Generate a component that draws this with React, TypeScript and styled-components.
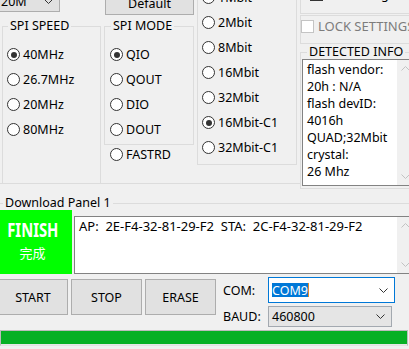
import styled, { createGlobalStyle } from 'styled-components'

const GlobalStyle = createGlobalStyle`
  html, body {
    margin: 0;
    padding: 0;
    background: #f0f0f0;
  }
  body {
    font-family: "Noto Sans", "Noto Sans CJK SC", sans-serif;
    font-size: 12.5px;
    color: #000;
  }
`

const Window = styled.div`
  width: 409px;
  height: 349px;
  overflow: hidden;
  background: #f0f0f0;
`

// the form is scrolled a bit, its top edge is cut off by the window
const Form = styled.div`
  margin-top: -24px;
  width: 430px;
`

const TopArea = styled.div`
  display: flex;
  height: 213px;
`

const Settings = styled.div`
  display: flex;
  width: 300px;
  height: 207px;
  border-bottom: 1px solid #dcdcdc;
`

const Column = styled.div<{ $w: number }>`
  display: flex;
  flex-direction: column;
  width: ${p => p.$w}px;
  flex-shrink: 0;
`

const Group = styled.fieldset`
  margin: 0;
  padding: 0;
  min-width: 0;
  box-sizing: border-box;
  border: 1px solid #dcdcdc;
`

const Legend = styled.legend<{ $indent: number }>`
  margin-left: ${p => p.$indent}px;
  padding: 0 2px;
  line-height: 14px;
  white-space: nowrap;
`

const SpeedGroup = styled(Group)`
  flex: 1;
  margin: 7px 0 0 2px;
  width: 99px;
  border-bottom: none;
`

const ModeGroup = styled(Group)`
  margin: 4px 0 0 3px;
  width: 90px;
  padding-bottom: 2px;
`

const SizeGroup = styled(Group)`
  width: 100px;
  border-top: none;
  padding-top: 9px;
  padding-bottom: 4px;
`

const RadioList = styled.div<{ $pad: number; $top?: number }>`
  display: flex;
  flex-direction: column;
  padding-left: ${p => p.$pad}px;
  padding-top: ${p => p.$top ?? 0}px;
`

const RadioRow = styled.label`
  display: flex;
  align-items: center;
  gap: 3px;
  height: 25px;
  white-space: nowrap;
`

const LooseRow = styled(RadioRow)`
  margin: -3px 0 0 9px;
`

const RadioCircle = styled.span<{ $on?: boolean }>`
  position: relative;
  width: 13px;
  height: 13px;
  box-sizing: border-box;
  border: 1px solid #333;
  border-radius: 50%;
  background: #fff;
  flex-shrink: 0;

  &::after {
    content: '';
    display: ${p => (p.$on ? 'block' : 'none')};
    position: absolute;
    left: 2.5px;
    top: 2.5px;
    width: 6px;
    height: 6px;
    border-radius: 50%;
    background: #333;
  }
`

const CheckRow = styled.label<{ $muted?: boolean; $left: number }>`
  display: flex;
  align-items: center;
  gap: 4px;
  height: 16px;
  margin-left: ${p => p.$left}px;
  white-space: nowrap;
  font-size: ${p => (p.$muted ? '13px' : '12.5px')};
  color: ${p => (p.$muted ? '#7c7c7c' : '#000')};
`

const CheckBox = styled.span<{ $muted?: boolean }>`
  width: 13px;
  height: 13px;
  box-sizing: border-box;
  border: 1px solid ${p => (p.$muted ? '#c4c4c4' : '#333')};
  background: #fff;
  flex-shrink: 0;
`

const Select = styled.div<{ $w: number; $h: number; $focus?: boolean }>`
  display: flex;
  align-items: center;
  justify-content: space-between;
  box-sizing: border-box;
  width: ${p => p.$w}px;
  height: ${p => p.$h}px;
  padding: 0 6px 0 3px;
  border: 1px solid ${p => (p.$focus ? '#0078d7' : '#a3a9b0')};
  background: ${p => (p.$focus ? '#fff' : '#e5e5e5')};
  flex-shrink: 0;
`

const SpeedSelect = styled(Select)`
  margin: 14px 0 0 -4px;
  padding-left: 4px;
  border-color: #adadad;
  background: #e1e1e1;
`

const PushButton = styled.button<{ $w: number; $h: number }>`
  width: ${p => p.$w}px;
  height: ${p => p.$h}px;
  padding: 0;
  box-sizing: border-box;
  border: 1px solid #adadad;
  background: #e1e1e1;
  font: inherit;
  color: #000;
  flex-shrink: 0;
`

const DefaultButton = styled(PushButton)`
  margin: 16px 0 0 4px;
`

const RightColumn = styled.div`
  display: flex;
  flex-direction: column;
  width: 120px;
`

const BinGroup = styled(Group)`
  height: 38px;
  border-top: none;
  padding-top: 10px;
`

const LockGroup = styled(Group)`
  height: 29px;
  margin-top: 1px;
  padding-top: 2px;
`

const InfoGroup = styled(Group)`
  margin-top: 1px;
  padding-bottom: 2px;
`

const TextArea = styled.div<{ $w: number; $h: number }>`
  display: flex;
  box-sizing: border-box;
  width: ${p => p.$w}px;
  height: ${p => p.$h}px;
  border: 1px solid #828282;
  background: #fff;
`

const InfoArea = styled(TextArea)`
  margin-left: 1px;
`

const AreaText = styled.div<{ $top: number; $size?: number }>`
  flex: 1;
  padding: ${p => p.$top}px 0 0 4px;
  font-size: ${p => p.$size ?? 12.5}px;
  line-height: 17px;
  white-space: pre;
  overflow: hidden;
`

const ScrollBar = styled.div`
  display: flex;
  flex-direction: column;
  justify-content: space-between;
  align-items: center;
  width: 17px;
  padding: 6px 0;
  background: #f0f0f0;
`

const DownloadPanel = styled(Group)`
  margin-top: 7px;
  border-left: none;
  border-right: none;
  border-bottom: none;
`

const PanelRow = styled.div`
  display: flex;
  align-items: flex-start;
`

const FinishBox = styled.div`
  display: flex;
  flex-direction: column;
  align-items: center;
  width: 72px;
  height: 64px;
  box-sizing: border-box;
  padding: 8px 7px 0 0;
  background: #00ff00;
  color: #fff;
  flex-shrink: 0;
`

const FinishTitle = styled.div`
  font-size: 19px;
  font-weight: 700;
  line-height: 24px;
  transform: scaleX(0.78);
`

const FinishSub = styled.div`
  font-family: "Noto Sans CJK SC", sans-serif;
  font-size: 13px;
  line-height: 21px;
`

const LogArea = styled(TextArea)`
  margin: 6px 0 0 2px;
`

const ButtonBar = styled.div`
  display: flex;
  gap: 3px;
  margin: 5px 0 0 -2px;
`

const PortGrid = styled.div`
  display: grid;
  grid-template-columns: 45px auto;
  align-items: center;
  row-gap: 3px;
  margin: 3px 0 0 7px;
`

const Selected = styled.span`
  display: flex;
  align-items: center;
  height: 14px;
  background: #0078d7;
  color: #fff;
  border-right: 1px solid #e08a2a;
`

const Progress = styled.div`
  width: 408px;
  height: 16px;
  margin-top: 3px;
  box-sizing: border-box;
  border: 1px solid #bcbcbc;
  border-bottom-color: #e2e2e2;
  background: #e6e6e6;
`

const ProgressFill = styled.div`
  height: 13px;
  background: #06b025;
`

function Chevron({ up, color = '#333' }: { up?: boolean; color?: string }) {
  return (
    <svg width="9" height="5" viewBox="0 0 9 5">
      <polyline
        points={up ? '0.5,4.5 4.5,0.5 8.5,4.5' : '0.5,0.5 4.5,4.5 8.5,0.5'}
        fill="none"
        stroke={color}
        strokeWidth="1"
      />
    </svg>
  )
}

function Radio({ label, on }: { label: string; on?: boolean }) {
  return (
    <RadioRow>
      <RadioCircle $on={on} />
      {label}
    </RadioRow>
  )
}

const speeds = ['40MHz', '26.7MHz', '20MHz', '80MHz']
const modes = ['QIO', 'QOUT', 'DIO', 'DOUT']
const sizes = ['1Mbit', '2Mbit', '8Mbit', '16Mbit', '32Mbit', '16Mbit-C1', '32Mbit-C1']
const info = ['flash vendor:', '20h : N/A', 'flash devID:', '4016h', 'QUAD;32Mbit', 'crystal:', '26 Mhz']

export default function App() {
  const progress = 100

  return (
    <Window>
      <GlobalStyle />
      <Form>
        <TopArea>
          <Settings>
            <Column $w={101}>
              <SpeedSelect $w={64} $h={22}>
                20M
                <Chevron />
              </SpeedSelect>
              <SpeedGroup>
                <Legend $indent={5}>SPI SPEED</Legend>
                <RadioList $pad={4} $top={9}>
                  {speeds.map((s, i) => (
                    <Radio key={s} label={s} on={i === 0} />
                  ))}
                </RadioList>
              </SpeedGroup>
            </Column>

            <Column $w={96}>
              <DefaultButton $w={89} $h={23}>Default</DefaultButton>
              <ModeGroup>
                <Legend $indent={6}>SPI MODE</Legend>
                <RadioList $pad={5} $top={9}>
                  {modes.map((m, i) => (
                    <Radio key={m} label={m} on={i === 0} />
                  ))}
                </RadioList>
              </ModeGroup>
              <LooseRow>
                <RadioCircle />
                FASTRD
              </LooseRow>
            </Column>

            <Column $w={103}>
              <SizeGroup>
                <RadioList $pad={4}>
                  {sizes.map(s => (
                    <Radio key={s} label={s} on={s === '16Mbit-C1'} />
                  ))}
                </RadioList>
              </SizeGroup>
            </Column>
          </Settings>

          <RightColumn>
            <BinGroup>
              <CheckRow $left={9}>
                <CheckBox />
                DoNotChgBin
              </CheckRow>
            </BinGroup>
            <LockGroup>
              <CheckRow $left={0} $muted>
                <CheckBox $muted />
                LOCK SETTINGS
              </CheckRow>
            </LockGroup>
            <InfoGroup>
              <Legend $indent={6}>DETECTED INFO</Legend>
              <InfoArea $w={113} $h={127}>
                <AreaText $top={1}>{info.join('\n')}</AreaText>
                <ScrollBar>
                  <Chevron up color="#c2c2c2" />
                  <Chevron color="#c2c2c2" />
                </ScrollBar>
              </InfoArea>
            </InfoGroup>
          </RightColumn>
        </TopArea>

        <DownloadPanel>
          <Legend $indent={3}>Download Panel 1</Legend>
          <PanelRow>
            <FinishBox>
              <FinishTitle>FINISH</FinishTitle>
              <FinishSub>完成</FinishSub>
            </FinishBox>
            <LogArea $w={341} $h={58}>
              <AreaText $top={1} $size={13}>{'AP:  2E-F4-32-81-29-F2  STA:  2C-F4-32-81-29-F2'}</AreaText>
              <ScrollBar>
                <Chevron up color="#c2c2c2" />
                <Chevron color="#c2c2c2" />
              </ScrollBar>
            </LogArea>
          </PanelRow>

          <PanelRow>
            <ButtonBar>
              <PushButton $w={70} $h={36}>START</PushButton>
              <PushButton $w={71} $h={36}>STOP</PushButton>
              <PushButton $w={71} $h={36}>ERASE</PushButton>
            </ButtonBar>
            <PortGrid>
              <span>COM:</span>
              <Select $w={127} $h={26} $focus>
                <Selected>COM9</Selected>
                <Chevron />
              </Select>
              <span>BAUD:</span>
              <Select $w={124} $h={21}>
                460800
                <Chevron />
              </Select>
            </PortGrid>
          </PanelRow>

          <Progress>
            <ProgressFill style={{ width: `${progress}%` }} />
          </Progress>
        </DownloadPanel>
      </Form>
    </Window>
  )
}
